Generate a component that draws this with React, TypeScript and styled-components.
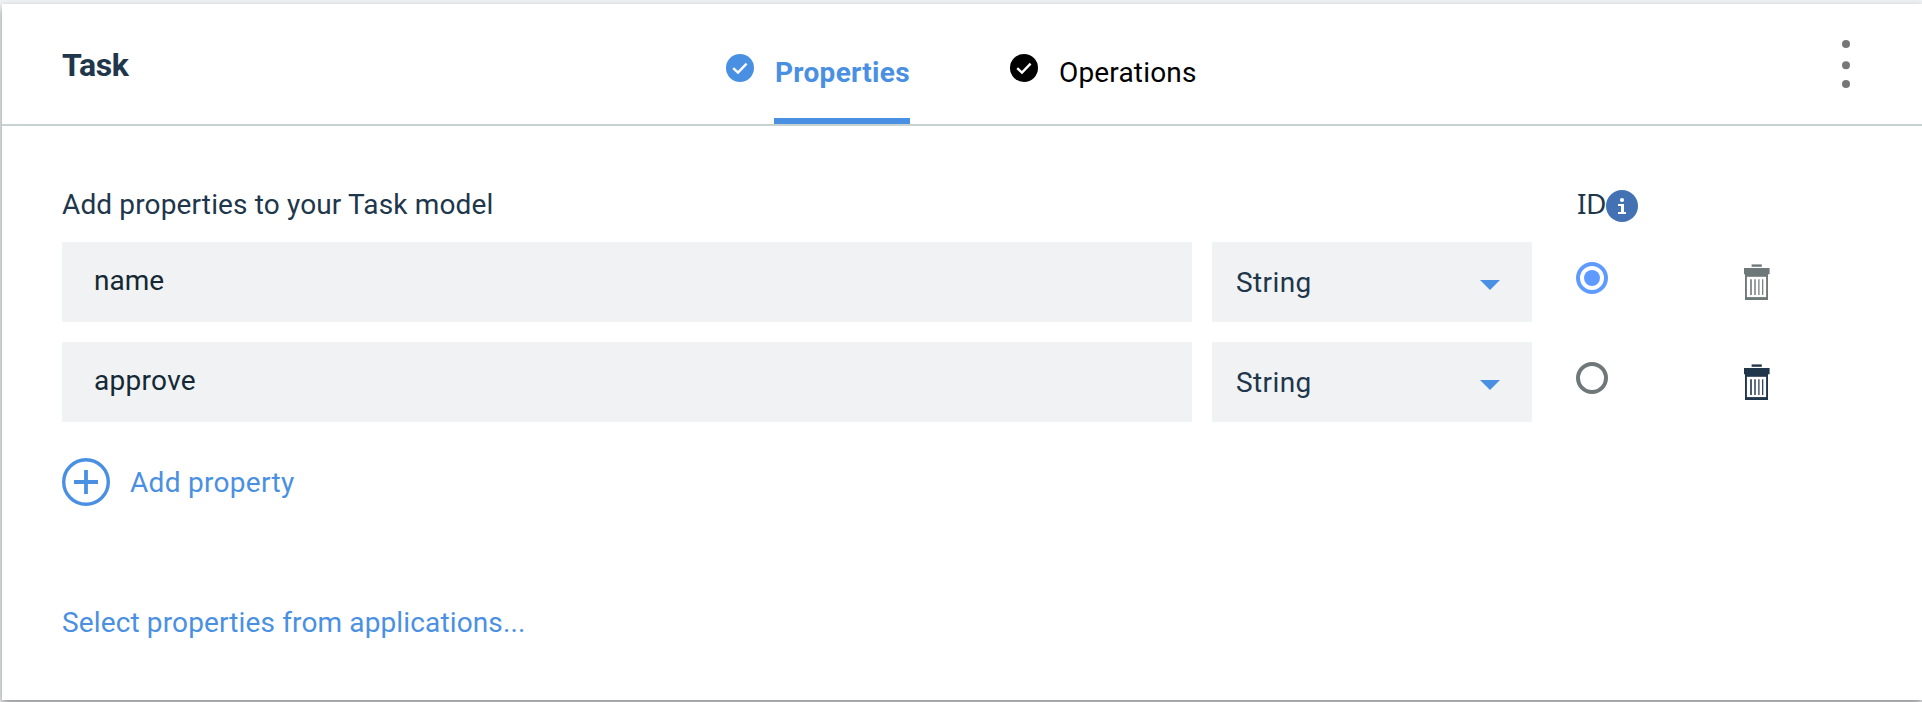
import React from 'react';
import styled, { createGlobalStyle, css } from 'styled-components';

const blue = '#4a90e2';
const ink = '#20364b';
const grey = '#6f7878';

const GlobalStyle = createGlobalStyle`
  * { box-sizing: border-box; }
  body {
    margin: 0;
    overflow: hidden;
    background: #eff1f3;
    color: ${ink};
    font: 400 28px/32px Roboto, "Liberation Sans", sans-serif;
  }
`;

const Page = styled.div`
  height: 702px;
  padding: 4px 0 2px 2px;
`;

const Card = styled.main`
  display: flex;
  flex-direction: column;
  height: 696px;
  background: #fff;
  box-shadow: 0 4px 8px rgba(0, 0, 0, 0.4);
`;

const Header = styled.header`
  display: grid;
  grid-template-columns: 724px 1fr auto;
  height: 122px;
  padding-right: 72px;
  border-bottom: 2px solid #c8d2d2;
`;

const Title = styled.h1`
  margin: 0;
  padding: 42px 0 0 60px;
  font-size: 32px;
  line-height: 38px;
  font-weight: 700;
  letter-spacing: -0.4px;
`;

const Tabs = styled.nav`
  display: flex;
  gap: 100px;
`;

const Tab = styled.a<{ $active?: boolean }>`
  display: flex;
  align-items: flex-start;
  gap: 20px;
  color: ${(p) => (p.$active ? blue : '#000')};

  svg {
    margin-top: 50px;
  }
`;

const TabLabel = styled.span<{ $active?: boolean }>`
  height: 120px;
  padding: 53px 0 0 1px;
  letter-spacing: 0.17px;
  ${(p) =>
    p.$active &&
    css`
      width: 136px;
      border-bottom: 6px solid ${blue};
      font-weight: 700;
      letter-spacing: 0.3px;
    `}
`;

const MenuButton = styled.button`
  display: flex;
  padding: 36px 0 0;
  border: 0;
  background: none;
`;

const Body = styled.section`
  padding: 60px 60px 0;
`;

const Row = styled.div`
  display: grid;
  grid-template-columns: 1130px 320px 148px auto;
  column-gap: 20px;
  height: 80px;
  margin-bottom: 20px;
`;

const HeadingRow = styled(Row)`
  height: 44px;
  margin-bottom: 12px;
`;

const Heading = styled.h2`
  margin: 0;
  padding-top: 3px;
  font-size: 28px;
  font-weight: 400;
  letter-spacing: 0.14px;
`;

const IdHeading = styled.div`
  grid-column: 3;
  display: flex;
  align-items: flex-start;
  padding: 4px 0 0 24px;

  span {
    width: 30px;
    margin-top: -3px;
    padding-left: 1px;
    font-family: "Noto Sans", sans-serif;
    letter-spacing: -0.5px;
  }

  svg {
    flex: none;
  }
`;

const Field = styled.div<{ $spacing?: number }>`
  padding: 23px 32px 0;
  background: #f0f2f4;
  color: #152935;
  letter-spacing: ${(p) => p.$spacing ?? 0}px;
`;

const Select = styled.div`
  display: flex;
  justify-content: space-between;
  align-items: flex-start;
  padding: 25px 32px 0 24px;
  background: #f0f2f4;
  letter-spacing: 0.4px;

  svg {
    margin-top: 13px;
  }
`;

const Radio = styled.span<{ $checked?: boolean }>`
  display: grid;
  place-items: center;
  width: 32px;
  height: 32px;
  margin: 20px 0 0 24px;
  border: 4px solid ${(p) => (p.$checked ? '#5f9bff' : grey)};
  border-radius: 50%;

  &::after {
    content: '';
    width: 16px;
    height: 16px;
    border-radius: 50%;
    background: ${(p) => (p.$checked ? '#5f9bff' : 'transparent')};
  }
`;

const Delete = styled.button<{ $disabled?: boolean }>`
  display: flex;
  align-items: flex-start;
  padding: 22px 0 0 24px;
  border: 0;
  background: none;
  color: ${(p) => (p.$disabled ? grey : ink)};
`;

const AddProperty = styled.a`
  display: flex;
  align-items: center;
  gap: 20px;
  margin-top: 36px;
  color: ${blue};
  letter-spacing: 0.3px;

  span {
    padding-top: 2px;
  }
`;

const SelectLink = styled.a`
  display: block;
  margin-top: 101px;
  color: ${blue};
  letter-spacing: 0.135px;
`;

const CheckIcon = () => (
  <svg width="28" height="28" viewBox="0 0 28 28">
    <circle cx="14" cy="14" r="14" fill="currentColor" />
    <path d="M7.2 14.1 12 18.6 20.6 9.6" fill="none" stroke="#fff" strokeWidth="2.4" />
  </svg>
);

const InfoIcon = () => (
  <svg width="32" height="32" viewBox="0 0 32 32">
    <circle cx="16" cy="16" r="16" fill="#4272b3" />
    <circle cx="16" cy="10" r="2.1" fill="#fff" />
    <path d="M12 14h6v8h2v2h-8v-2h3v-6h-3z" fill="#fff" />
  </svg>
);

const DotsIcon = () => (
  <svg width="8" height="48" viewBox="0 0 8 48" fill="#777">
    <circle cx="4" cy="4" r="4" />
    <circle cx="4" cy="25.3" r="4" />
    <circle cx="4" cy="44" r="4" />
  </svg>
);

const CaretIcon = () => (
  <svg width="20" height="10" viewBox="0 0 20 10">
    <path d="M0 0h20L10 10z" fill={blue} />
  </svg>
);

const TrashIcon = () => (
  <svg width="26" height="36" viewBox="0 0 26 36" fill="currentColor">
    <path d="M7.6 0.4h10.2v2.4H7.6z" />
    <path d="M0 4h25.6v6.2H24V36H1V10.2H0z" />
    <path d="M2.9 12.8h19.2v20.3H2.9z" fill="#fff" />
    <path d="M6.2 15.2h1.6V31H6.2zM10.3 15.2h1.4V31h-1.4zM14.3 15.2h1.2V31h-1.2zM18.1 15.2h1.2V31h-1.2z" />
  </svg>
);

const PlusIcon = () => (
  <svg width="48" height="48" viewBox="0 0 48 48" fill="none" stroke={blue}>
    <circle cx="24" cy="24" r="22.3" strokeWidth="3.4" />
    <path d="M24 12v24M12 24h24" strokeWidth="3.8" />
  </svg>
);

const properties = [
  { name: 'name', type: 'String', isId: true, spacing: 0 },
  { name: 'approve', type: 'String', isId: false, spacing: 0.3 },
];

export default function App() {
  return (
    <>
      <GlobalStyle />
      <Page>
        <Card>
          <Header>
            <Title>Task</Title>
            <Tabs>
              <Tab $active>
                <CheckIcon />
                <TabLabel $active>Properties</TabLabel>
              </Tab>
              <Tab>
                <CheckIcon />
                <TabLabel>Operations</TabLabel>
              </Tab>
            </Tabs>
            <MenuButton aria-label="More actions">
              <DotsIcon />
            </MenuButton>
          </Header>
          <Body>
            <HeadingRow>
              <Heading>Add properties to your Task model</Heading>
              <IdHeading>
                <span>ID</span>
                <InfoIcon />
              </IdHeading>
            </HeadingRow>
            {properties.map((p) => (
              <Row key={p.name}>
                <Field $spacing={p.spacing}>{p.name}</Field>
                <Select>
                  {p.type}
                  <CaretIcon />
                </Select>
                <Radio $checked={p.isId} />
                <Delete $disabled={p.isId} aria-label={`Delete ${p.name}`}>
                  <TrashIcon />
                </Delete>
              </Row>
            ))}
            <AddProperty>
              <PlusIcon />
              <span>Add property</span>
            </AddProperty>
            <SelectLink>Select properties from applications...</SelectLink>
          </Body>
        </Card>
      </Page>
    </>
  );
}
